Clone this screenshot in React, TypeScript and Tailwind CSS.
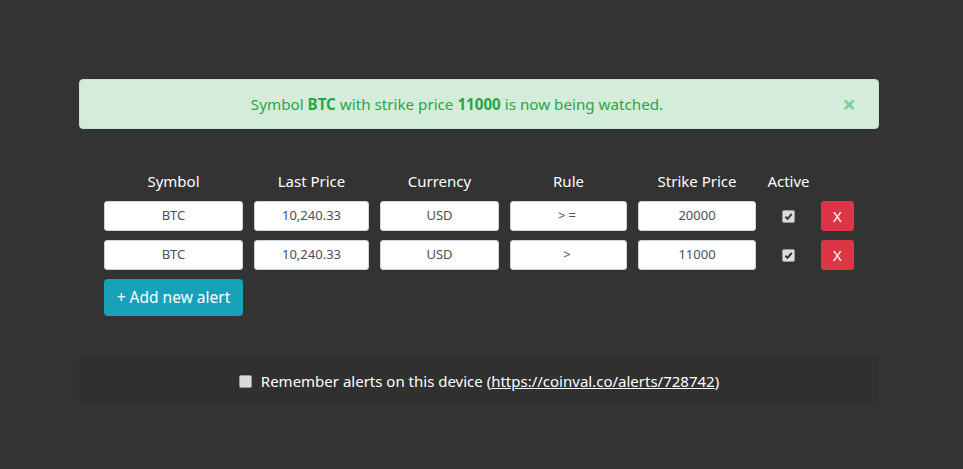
import React from "react";

const font = { fontFamily: '"Segoe UI", "Noto Sans", "Open Sans", sans-serif' };

function Check({ checked }: { checked: boolean }) {
  return (
    <span className="inline-flex h-[13px] w-[13px] items-center justify-center rounded-[2px] border border-[#9a9a9a] bg-[#dcdcdc]">
      {checked && (
        <svg width="9" height="9" viewBox="0 0 10 10">
          <path d="M1.5 5.2 L4 7.6 L8.6 2.2" fill="none" stroke="#333" strokeWidth="2.2" />
        </svg>
      )}
    </span>
  );
}

function Field({ v }: { v: string }) {
  return (
    <div
      className={
        "flex h-[30px] items-center justify-center rounded-[3px] border border-[#ced4da] bg-white text-[13px] text-[#495057]" +
        (v.startsWith(">") ? " tracking-[3px]" : "")
      }
    >
      {v}
    </div>
  );
}

const rows = [
  ["BTC", "10,240.33", "USD", ">=", "20000"],
  ["BTC", "10,240.33", "USD", ">", "11000"],
];

export default function App() {
  return (
    <div className="min-h-[469px] w-full bg-[#333333] pt-[79px]" style={font}>
      <div className="ml-[79px] w-[800px]">
        <div className="relative flex h-[50px] items-center justify-center rounded-[4px] border border-[#c3e6cb] bg-[#d4edda] pl-[20px] pr-[64px] text-[15.2px] text-[#28a745]">
          <span>
            Symbol <b>BTC</b> with strike price <b>11000</b> is now being watched.
          </span>
          <span className="absolute right-[22px] top-[12px] text-[24px] font-bold leading-[24px] text-[#7dcf95]">×</span>
        </div>

        <div className="mt-[40px] px-[25px]">
          <div className="grid grid-cols-[139px_115px_119px_117px_118px_43px_33px] gap-x-[11px] gap-y-[9px] text-white">
            {["Symbol", "Last Price", "Currency", "Rule", "Strike Price", "Active", ""].map((h, i) => (
              <div key={i} className="mb-[-1px] h-[24px] text-center text-[15px] leading-[24px]">
                {h}
              </div>
            ))}
            {rows.map((r, ri) => (
              <React.Fragment key={ri}>
                {r.map((c, ci) => (
                  <Field key={ci} v={c} />
                ))}
                <div className="flex items-center justify-center">
                  <Check checked />
                </div>
                <div className="flex h-[30px] items-center justify-center rounded-[3px] bg-[#dc3545] text-[15px] text-white">
                  X
                </div>
              </React.Fragment>
            ))}
          </div>
          <button className="mt-[9px] flex h-[37px] w-[139px] items-center justify-center rounded-[4px] bg-[#17a2b8] text-[15.5px] text-white">
            + Add new alert
          </button>
        </div>

        <div className="mt-[41px] flex h-[48px] items-center justify-center border-t border-[#2a2a2a] bg-[#303030] text-[15px] text-white">
          <span className="mr-[9px] inline-flex h-[13px] w-[13px] rounded-[2px] border border-[#9a9a9a] bg-[#dcdcdc]" />
          <span>
            Remember alerts on this device (<span className="underline">https://coinval.co/alerts/728742</span>)
          </span>
        </div>
      </div>
    </div>
  );
}
